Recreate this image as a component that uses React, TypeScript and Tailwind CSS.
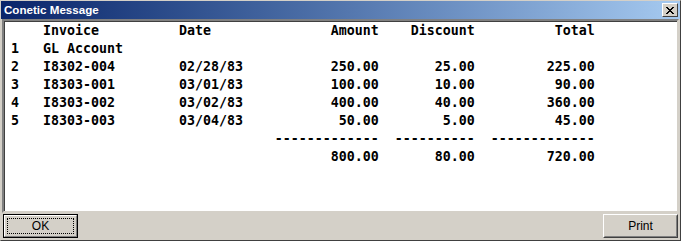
import React from "react";

type Row = [string, string, string, string, string, string];

const data: Row[] = [
  ["", "Invoice", "Date", "Amount", "Discount", "Total"],
  ["1", "GL Account", "", "", "", ""],
  ["2", "I8302-004", "02/28/83", "250.00", "25.00", "225.00"],
  ["3", "I8303-001", "03/01/83", "100.00", "10.00", "90.00"],
  ["4", "I8303-002", "03/02/83", "400.00", "40.00", "360.00"],
  ["5", "I8303-003", "03/04/83", "50.00", "5.00", "45.00"],
];

function fmt(r: Row): string {
  const [n, inv, date, amt, disc, tot] = r;
  const s =
    n.padEnd(4) +
    inv.padEnd(17) +
    date.padEnd(19) +
    amt.padStart(6) +
    disc.padStart(12) +
    tot.padStart(15);
  return s.replace(/\s+$/, "");
}

const lines: string[] = [
  ...data.map(fmt),
  "".padEnd(33) + "-".repeat(13) + "-".repeat(10).padStart(12) + "-".repeat(13).padStart(15),
  "".padEnd(40) + "800.00" + "80.00".padStart(12) + "720.00".padStart(15),
];

export default function App() {
  return (
    <div className="w-[681px] h-[241px] bg-[#d4d0c8] border border-t-[#d4d0c8] border-l-[#d4d0c8] border-b-[#404040] border-r-[#404040] flex flex-col overflow-hidden">
      {/* Title bar */}
      <div className="h-[18px] shrink-0 bg-gradient-to-r from-[#0a246a] to-[#a6caf0] flex items-center justify-between pl-[3px] pr-[2px]">
        <span
          className="text-white font-bold text-[11.6px] leading-none"
          style={{ fontFamily: '"Liberation Sans", Arial, sans-serif' }}
        >
          Conetic Message
        </span>
        <div className="w-[16px] h-[14px] bg-[#d4d0c8] border border-t-white border-l-white border-b-[#404040] border-r-[#404040] flex items-center justify-center">
          <svg width="8" height="7" viewBox="0 0 8 7">
            <path d="M0 0h2v1h-2zM6 0h2v1h-2zM1 1h2v1h-2zM5 1h2v1h-2zM2 2h4v1h-4zM3 3h2v1h-2zM2 4h4v1h-4zM1 5h2v1h-2zM5 5h2v1h-2zM0 6h2v1h-2zM6 6h2v1h-2z" fill="#000" />
          </svg>
        </div>
      </div>
      {/* Content */}
      <div className="mx-[1px] h-[194px] shrink-0 bg-white border-2 border-t-[#808080] border-l-[#808080] border-b-[#d4d0c8] border-r-[#d4d0c8] shadow-[inset_1px_1px_0_#404040]">
        <pre
          className="m-0 pl-[7px] pt-[1px] text-[13.29px] leading-[18px] font-bold text-black"
          style={{ fontFamily: '"DejaVu Sans Mono", monospace' }}
        >
          {lines.join("\n")}
        </pre>
      </div>
      {/* Buttons */}
      <div className="flex justify-between items-start px-[2px] pt-[1px]">
        <button
          className="w-[75px] h-[24px] border border-black bg-[#d4d0c8] p-0"
          style={{ fontFamily: '"Liberation Sans", Arial, sans-serif' }}
        >
          <div className="w-full h-full border border-t-white border-l-white border-b-[#808080] border-r-[#808080] p-[2px]">
            <div className="w-full h-full border border-dotted border-black flex items-center justify-center text-[12px] text-black leading-none">
              OK
            </div>
          </div>
        </button>
        <button
          className="w-[75px] h-[24px] bg-[#d4d0c8] border border-t-white border-l-white border-b-[#404040] border-r-[#404040] p-0"
          style={{ fontFamily: '"Liberation Sans", Arial, sans-serif' }}
        >
          <div className="w-full h-full border border-t-[#d4d0c8] border-l-[#d4d0c8] border-b-[#808080] border-r-[#808080] flex items-center justify-center text-[12px] text-black leading-none">
            Print
          </div>
        </button>
      </div>
    </div>
  );
}
